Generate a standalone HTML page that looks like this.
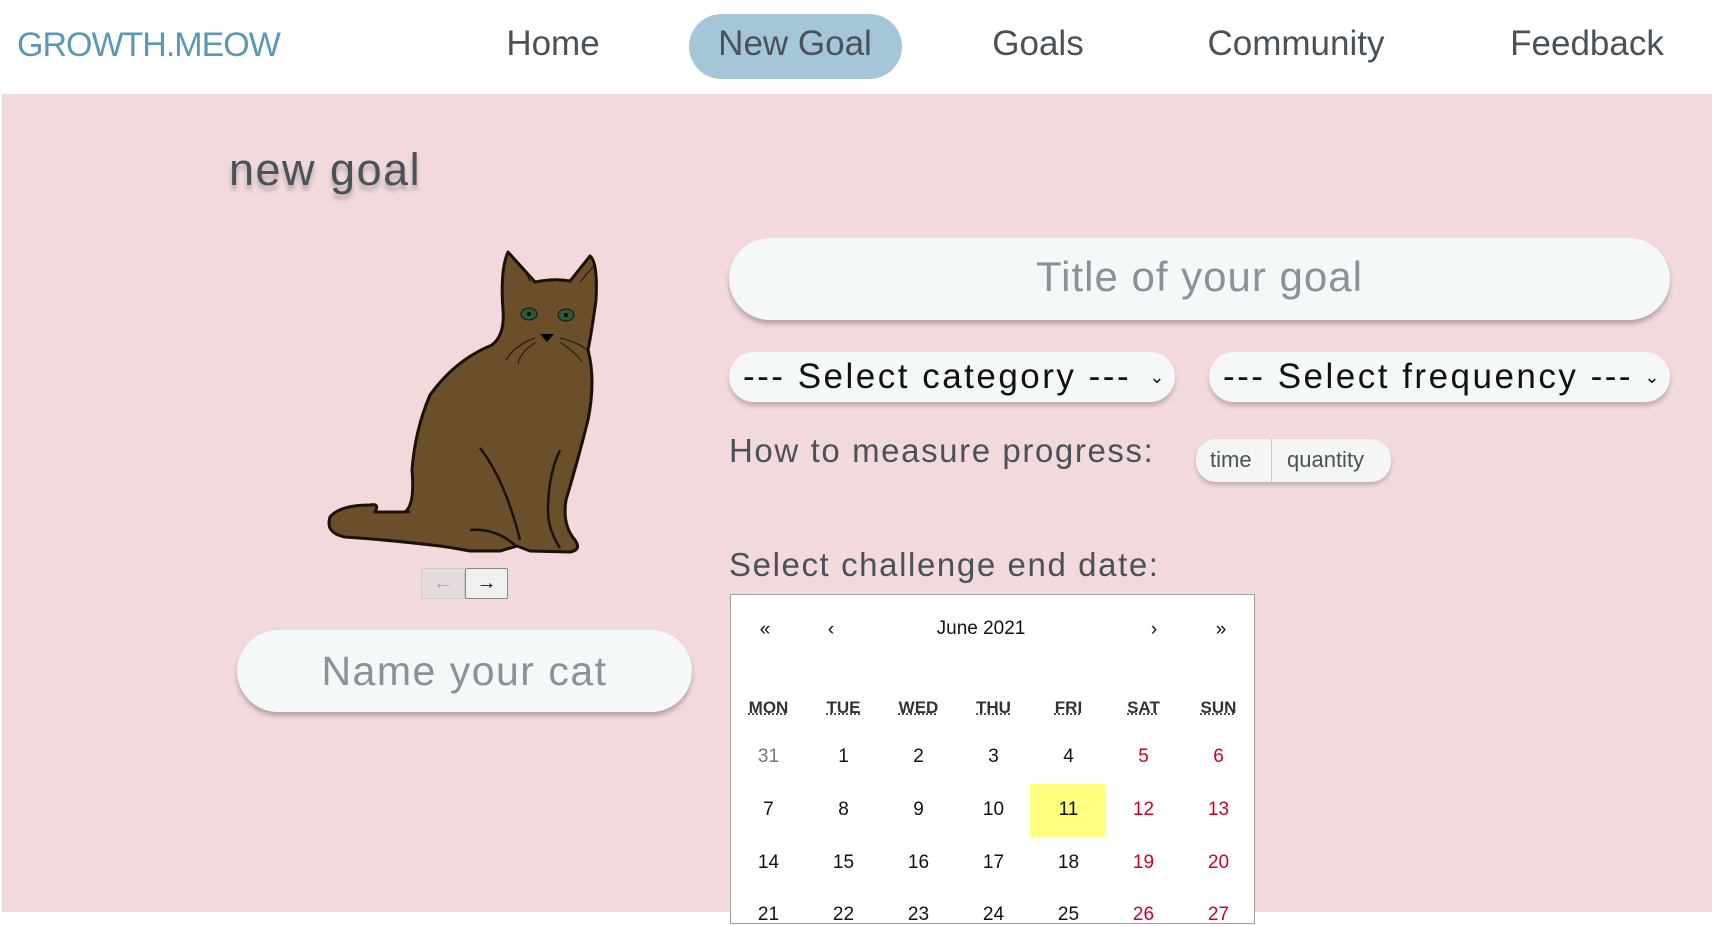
<!DOCTYPE html>
<html><head><meta charset="utf-8"><style>
*{box-sizing:border-box;margin:0;padding:0}
body{width:1712px;height:912px;overflow:hidden;background:#fff;font-family:"Liberation Sans",sans-serif;position:relative}
.nav{position:absolute;left:0;top:0;width:1712px;height:94px;background:#fff}
.logo{position:absolute;left:17px;top:26px;font-size:34px;color:#5b98b6;letter-spacing:-1px}
.ni{position:absolute;top:24px;font-size:35px;color:#4a5259;transform:translateX(-50%);white-space:nowrap}
.pill{position:absolute;left:689px;top:14px;width:213px;height:65px;border-radius:33px;background:#a5c5d8}
.main{position:absolute;left:2px;top:94px;width:1710px;height:818px;background:#f2dadc}
.h{position:absolute;left:229px;top:144px;font-size:45px;letter-spacing:1.5px;color:#4a5259;text-shadow:0 5px 5px rgba(0,0,0,.25)}
.inp{position:absolute;background:#f4f8f8;border-radius:45px;box-shadow:0 4px 5px rgba(0,0,0,.25);color:#8a9197;text-align:center}
.sel{position:absolute;background:#f4f8f8;border-radius:25px;box-shadow:0 4px 5px rgba(0,0,0,.2);color:#111;font-size:35px;letter-spacing:2.5px;padding-left:14px;line-height:50px;white-space:nowrap}
.sel span{position:absolute;right:8px;top:0;font-size:18px}
.lbl{position:absolute;left:729px;font-size:33px;letter-spacing:1.6px;color:#4a5259}
.tg{position:absolute;left:1196px;top:439px;width:195px;height:43px;border-radius:20px;background:#f4f6f6;box-shadow:0 3px 4px rgba(0,0,0,.2);font-size:22px;color:#4a5259}
.cal{position:absolute;left:730px;top:594px;width:525px;height:330px;background:#fff;border:1px solid #a0a0a0;font-size:19px;color:#111}
.c{position:absolute;width:75px;text-align:center}
.btn{position:absolute;top:568px;height:31px;border:1px solid #888;border-radius:2px;font-size:20px;text-align:center;line-height:28px}
</style></head><body>
<div class="nav">
<div class="logo">GROWTH.MEOW</div>
<div class="pill"></div>
<div class="ni" style="left:553px">Home</div>
<div class="ni" style="left:795px">New Goal</div>
<div class="ni" style="left:1038px">Goals</div>
<div class="ni" style="left:1296px">Community</div>
<div class="ni" style="left:1587px">Feedback</div>
</div>
<div class="main"></div>
<div class="h">new goal</div>
<svg style="position:absolute;left:320px;top:245px" width="290" height="315" viewBox="320 245 290 315">
<path d="M508 252 L535 282 Q555 278 570 281 L590 256 Q598 262 596 300 Q592 330 588 350 Q596 380 588 420 Q578 460 566 500 Q562 525 575 540 Q582 550 570 552 L530 551 L517 546 L500 551 L470 551 Q455 548 440 546 Q390 540 345 537 Q325 533 330 517 Q340 505 370 505 Q380 503 375 512 L405 512 Q415 505 412 470 Q415 430 430 395 Q455 360 492 345 Q505 335 503 310 Q500 270 508 252Z" fill="#6b4f2a" stroke="#1a1208" stroke-width="3" stroke-linejoin="round"/>
<path d="M480 448 Q505 480 520 540 M560 450 Q548 475 548 510 Q548 530 560 548 M470 530 Q495 528 515 545 M375 512 L410 512" fill="none" stroke="#1a1208" stroke-width="2.5"/>
<path d="M518 262 Q525 268 530 282 M595 265 Q588 272 580 282" fill="none" stroke="#1a1208" stroke-width="1"/>
<ellipse cx="529" cy="314" rx="8" ry="6" fill="#2a5a3a" stroke="#111"/><ellipse cx="566" cy="315" rx="8" ry="6" fill="#2a5a3a" stroke="#111"/>
<circle cx="529" cy="314" r="2" fill="#000"/><circle cx="566" cy="315" r="2" fill="#000"/>
<path d="M540 334 L554 334 L547 342Z" fill="#000"/>
<path d="M535 338 Q515 345 506 360 M536 342 Q520 352 518 364 M560 338 Q578 342 590 352 M560 342 Q575 352 582 362" fill="none" stroke="#1a1208" stroke-width="1"/>
</svg>
<div class="btn" style="left:421px;width:44px;background:#e7dcdd;color:#aaa;border-color:#ccc">←</div>
<div class="btn" style="left:465px;width:43px;background:#f0f0f0;color:#111">→</div>
<div class="inp" style="left:237px;top:630px;width:455px;height:82px;font-size:41px;letter-spacing:1.5px;line-height:82px">Name your cat</div>
<div class="inp" style="left:729px;top:238px;width:941px;height:82px;font-size:42px;letter-spacing:1px;line-height:78px">Title of your goal</div>
<div class="sel" style="left:729px;top:352px;width:446px;height:50px">--- Select category ---<span>⌄</span></div>
<div class="sel" style="left:1209px;top:352px;width:461px;height:50px">--- Select frequency ---<span>⌄</span></div>
<div class="lbl" style="top:432px">How to measure progress:</div>
<div class="tg"><span style="position:absolute;left:14px;top:8px">time</span><div style="position:absolute;left:75px;top:0;width:1px;height:43px;background:#ccc"></div><span style="position:absolute;left:91px;top:8px">quantity</span></div>
<div class="lbl" style="top:546px">Select challenge end date:</div>
<div class="cal">
<div style="position:absolute;left:22px;top:24px;width:24px;text-align:center">«</div><div style="position:absolute;left:88px;top:24px;width:24px;text-align:center">‹</div>
<div style="position:absolute;left:150px;width:200px;text-align:center;top:23px">June 2021</div>
<div style="position:absolute;left:411px;top:24px;width:24px;text-align:center">›</div><div style="position:absolute;left:478px;top:24px;width:24px;text-align:center">»</div>
<div style="position:absolute;left:0;top:103px;width:525px;font-size:17px;font-weight:bold;color:#333">
<div class="c" style="left:0;text-decoration:underline dotted">MON</div><div class="c" style="left:75px;text-decoration:underline dotted">TUE</div><div class="c" style="left:150px;text-decoration:underline dotted">WED</div><div class="c" style="left:225px;text-decoration:underline dotted">THU</div><div class="c" style="left:300px;text-decoration:underline dotted">FRI</div><div class="c" style="left:375px;text-decoration:underline dotted">SAT</div><div class="c" style="left:450px;text-decoration:underline dotted">SUN</div></div>
<div style="position:absolute;left:299px;top:189px;width:75px;height:53px;background:#ffff80"></div>
<div style="position:absolute;left:0;top:151px;width:525px">
<div class="c" style="left:0;color:#777">31</div><div class="c" style="left:75px">1</div><div class="c" style="left:150px">2</div><div class="c" style="left:225px">3</div><div class="c" style="left:300px">4</div><div class="c" style="left:375px;color:#d10023">5</div><div class="c" style="left:450px;color:#d10023">6</div></div>
<div style="position:absolute;left:0;top:204px;width:525px">
<div class="c" style="left:0">7</div><div class="c" style="left:75px">8</div><div class="c" style="left:150px">9</div><div class="c" style="left:225px">10</div><div class="c" style="left:300px">11</div><div class="c" style="left:375px;color:#d10023">12</div><div class="c" style="left:450px;color:#d10023">13</div></div>
<div style="position:absolute;left:0;top:257px;width:525px">
<div class="c" style="left:0">14</div><div class="c" style="left:75px">15</div><div class="c" style="left:150px">16</div><div class="c" style="left:225px">17</div><div class="c" style="left:300px">18</div><div class="c" style="left:375px;color:#d10023">19</div><div class="c" style="left:450px;color:#d10023">20</div></div>
<div style="position:absolute;left:0;top:309px;width:525px">
<div class="c" style="left:0">21</div><div class="c" style="left:75px">22</div><div class="c" style="left:150px">23</div><div class="c" style="left:225px">24</div><div class="c" style="left:300px">25</div><div class="c" style="left:375px;color:#d10023">26</div><div class="c" style="left:450px;color:#d10023">27</div></div>
</div>
</body></html>
